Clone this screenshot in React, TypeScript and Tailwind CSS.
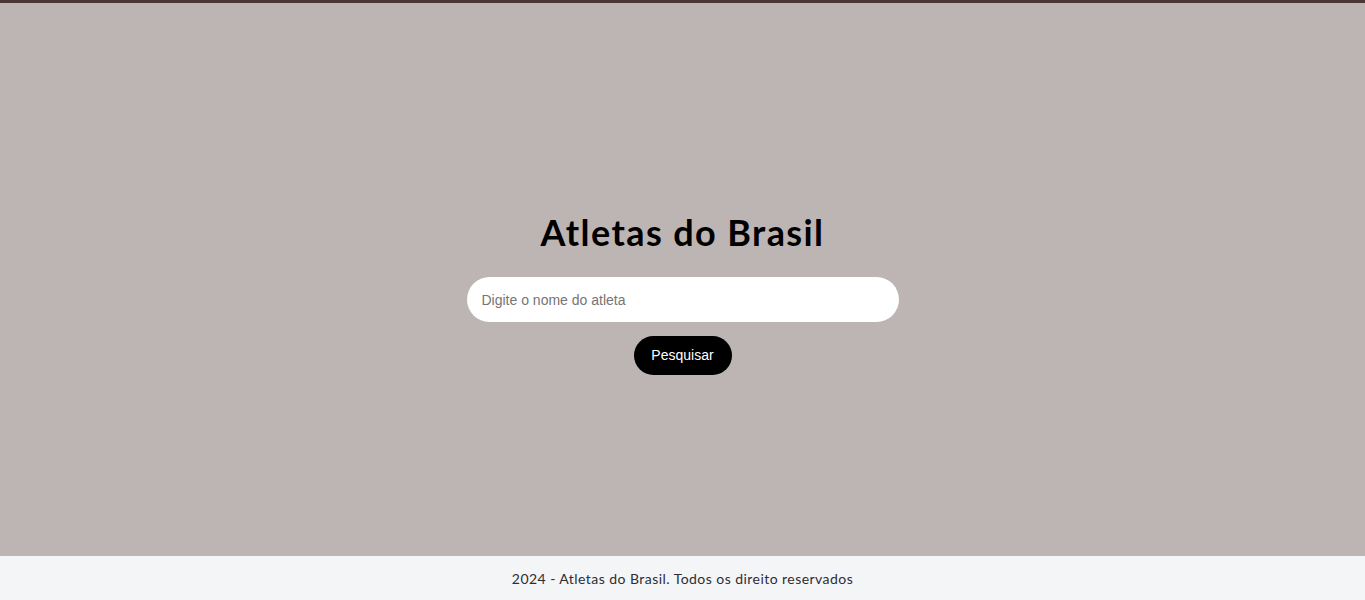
export default function App() {
  return (
    <div className="min-h-screen flex flex-col border-t-[3px] border-[#4b3636] bg-[#bdb5b4]">
      <main className="flex-1 flex flex-col items-center justify-center pt-[27px]">
        <h1 className="text-[36px] leading-[43px] font-bold tracking-[1.4px] text-black font-['Lato','Open_Sans',sans-serif]">
          Atletas do Brasil
        </h1>
        <input
          type="text"
          placeholder="Digite o nome do atleta"
          className="mt-[23px] w-[432px] h-[45px] rounded-full bg-white px-[15px] text-[14px] text-black placeholder:text-[#757575] outline-none font-['Liberation_Sans',Arial,sans-serif]"
        />
        <button className="mt-[14px] w-[98px] h-[39px] rounded-full bg-black text-white text-[14px] font-['Liberation_Sans',Arial,sans-serif]">
          Pesquisar
        </button>
      </main>
      <footer className="h-[44px] bg-[#f4f5f7] flex items-center justify-center text-[14px] tracking-[0.45px] text-[#2d2d33] font-['Lato','Open_Sans',sans-serif]">
        2024 - Atletas do Brasil. Todos os direito reservados
      </footer>
    </div>
  );
}
